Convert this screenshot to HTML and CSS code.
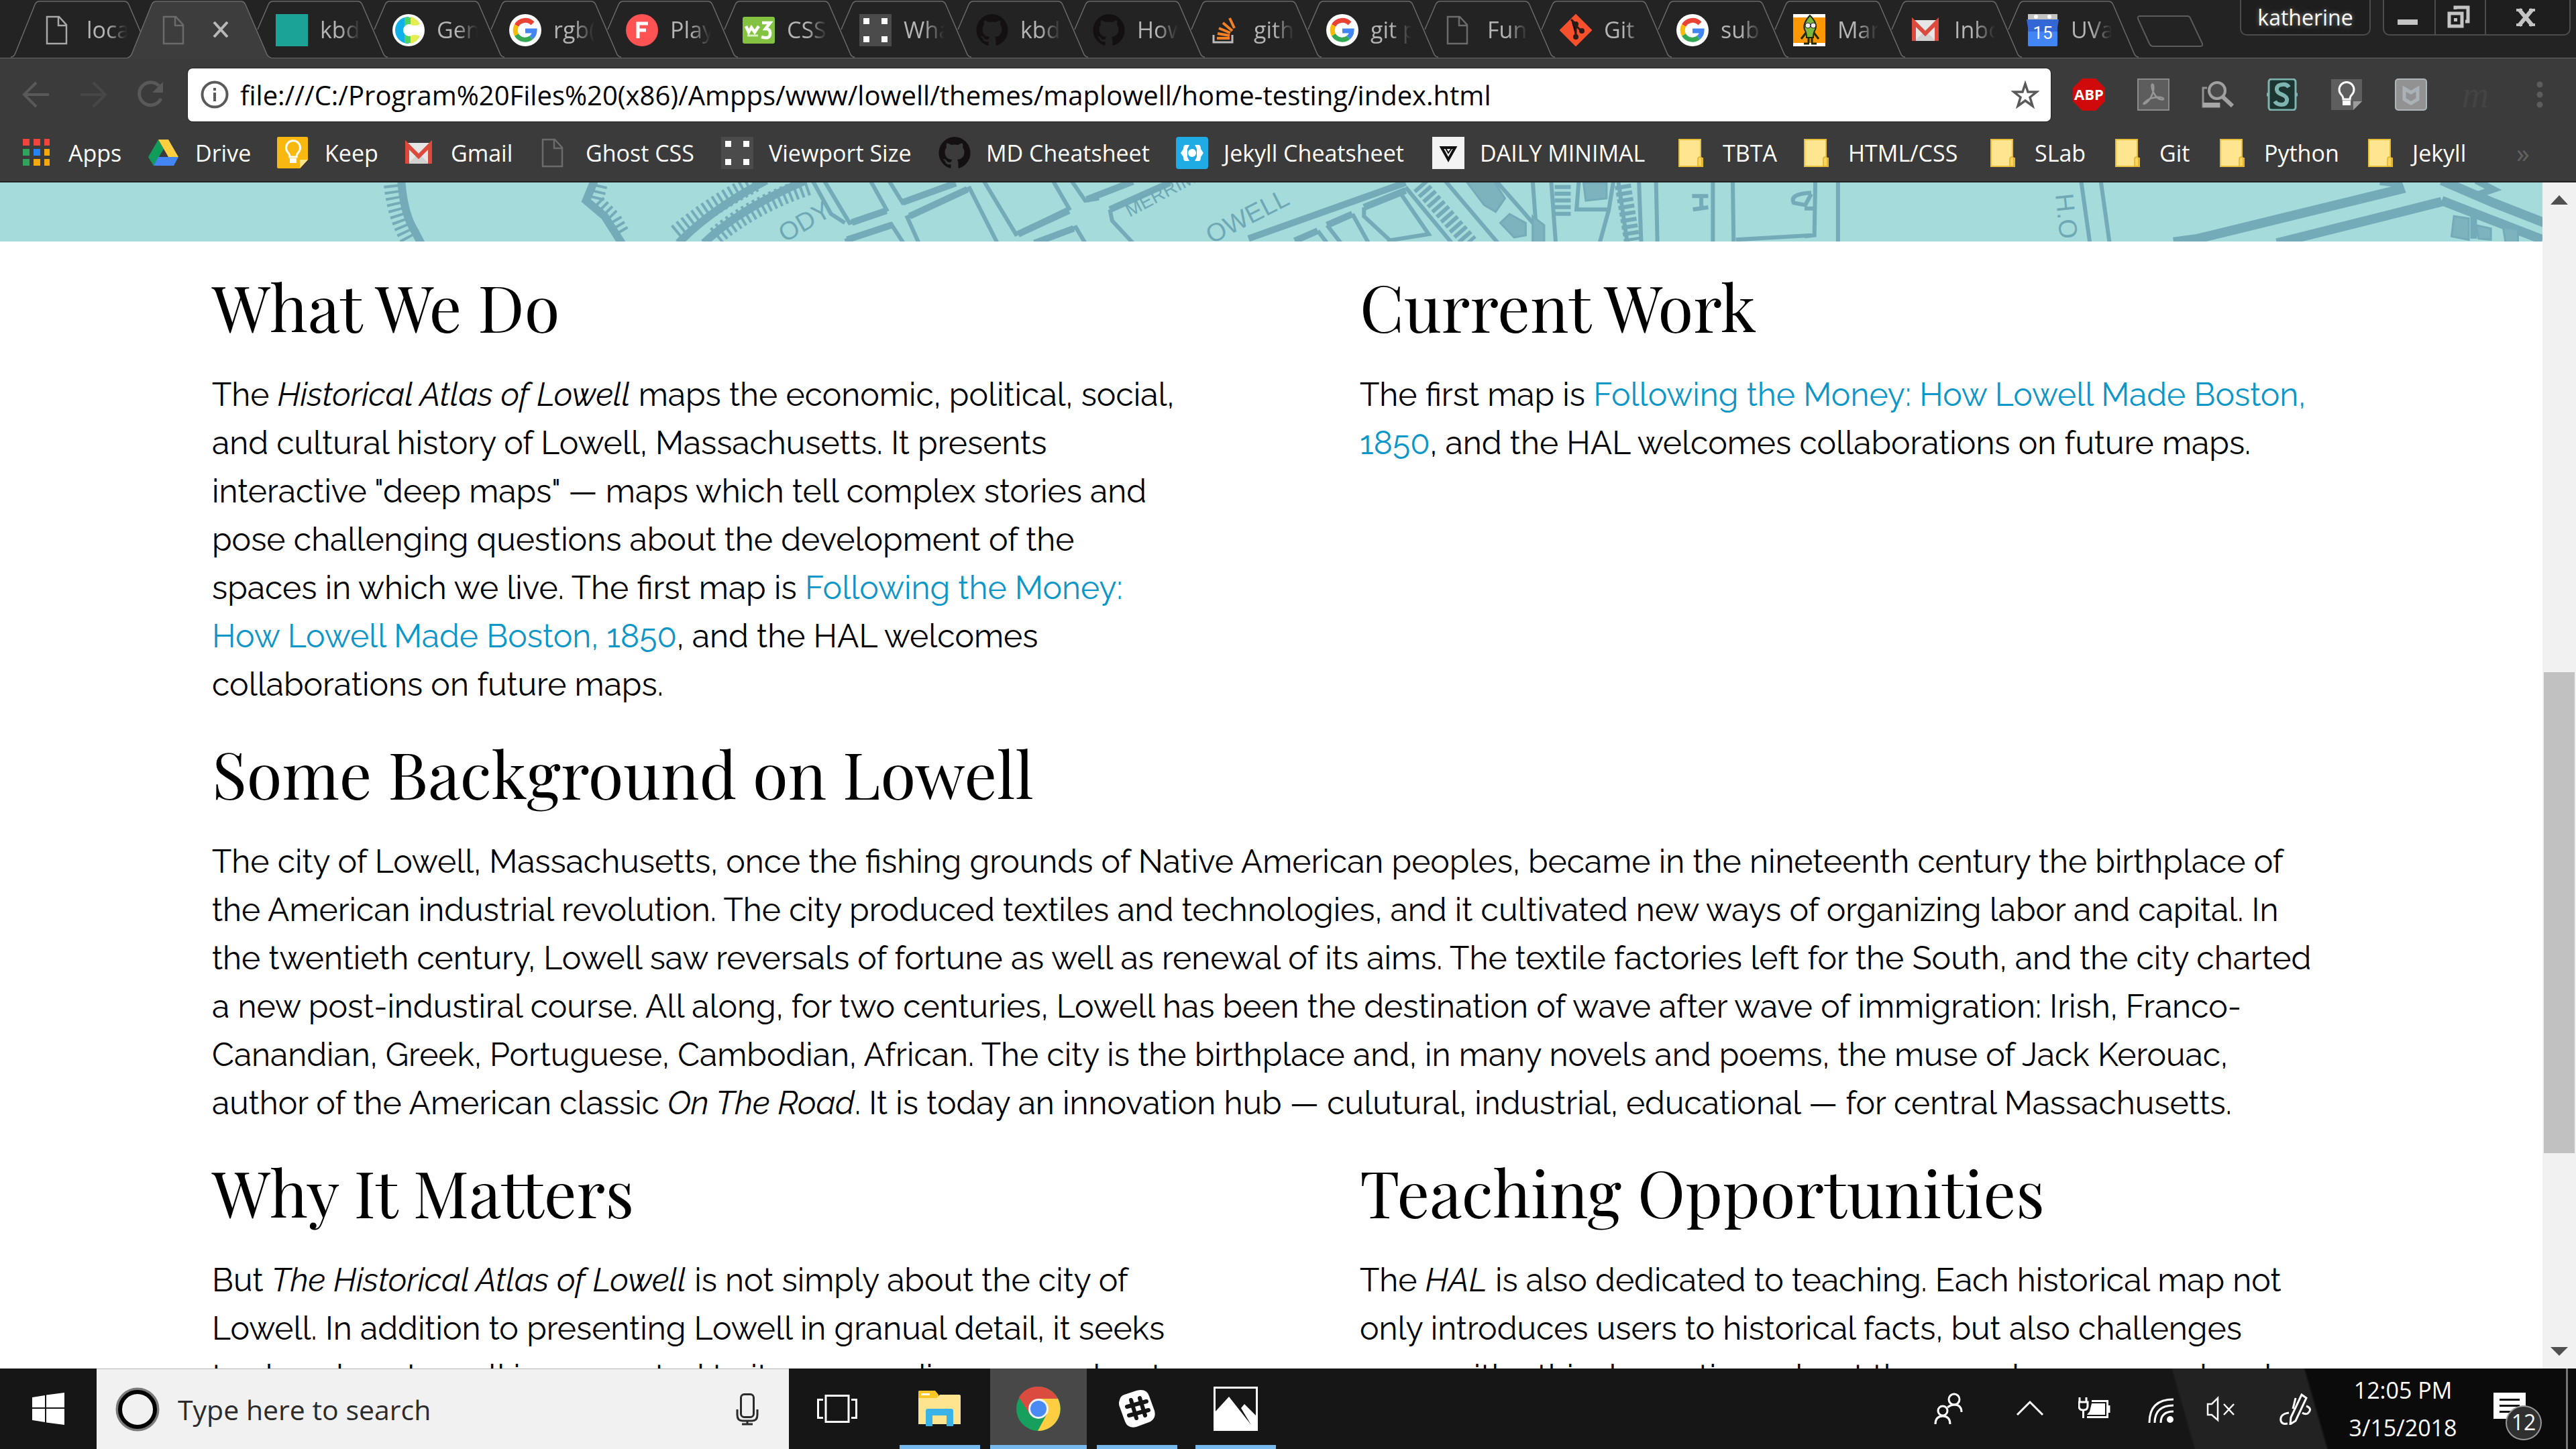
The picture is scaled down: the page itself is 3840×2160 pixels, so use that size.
FILE: index.html
```html
<!DOCTYPE html>
<html lang="en">
<head>
<meta charset="utf-8">
<title>Historical Atlas of Lowell</title>
<link rel="stylesheet" href="styles.css">
</head>
<body>
<svg class="defs" aria-hidden="true">
  <symbol id="tab-edge" viewBox="0 0 214 86"><path d="M20 44 36 7Q38 2 43 2H169Q174 2 176 7L207 79Q209 85 214 85" fill="none" stroke="#6a6a6a" stroke-width="1.5"/></symbol>
  <symbol id="tab-first" viewBox="0 0 214 86"><path d="M0 85Q5 85 7 79L36 7Q38 2 43 2H169Q174 2 176 7L207 79Q209 85 214 85" fill="none" stroke="#6a6a6a" stroke-width="1.5"/></symbol>
  <symbol id="tab-active" viewBox="0 0 214 88"><path d="M0 88V85Q5 85 7 79L36 7Q38 2 43 2H169Q174 2 176 7L207 79Q209 85 214 85V88" fill="#3c3d3c"/><path d="M0 86Q5 85 7 79L36 7Q38 2 43 2H169Q174 2 176 7L207 79Q209 85 214 86" fill="none" stroke="#6a6a6a" stroke-width="1.5"/></symbol>
  <symbol id="doc" viewBox="0 0 48 48"><path d="M7 4H25L36 16V44H7ZM24 4V17H36" fill="none" stroke="currentColor" stroke-width="2.5"/></symbol>
  <symbol id="google" viewBox="0 0 48 48"><circle cx="24" cy="24" r="24" fill="#fff"/><g fill="none" stroke-width="7"><path d="M35 14A15 15 0 0 0 11 17" stroke="#ea4335"/><path d="M11 17A15 15 0 0 0 11 31" stroke="#fbbc05"/><path d="M11 31A15 15 0 0 0 33 35" stroke="#34a853"/><path d="M33 35A14 14 0 0 0 38 25H24" stroke="#4285f4"/></g></symbol>
  <symbol id="gmail" viewBox="0 0 48 48"><rect x="3" y="9" width="40" height="31" rx="2" fill="#e6e6e6"/><path d="M7 40 23 25 39 40Z" fill="#d2d2d2"/><path d="M6 40V12L23 29 40 12V40" fill="none" stroke="#dc4a3d" stroke-width="6"/></symbol>
  <symbol id="octocat" viewBox="0 0 48 48"><path fill="#141011" d="M24 0A24 24 0 0 0 17 46.800C18 47 18.500 46.300 18.500 45.500V41C12 42.500 10.500 38 10.500 38C9.500 35 8 34.500 8 34.500C6 33 8 33 8 33C10.500 33.200 12 35.500 12 35.500C14 39 17.500 38 19 37.300C19.200 35.700 19.800 34.700 20.500 34.100C15 33.500 9.500 31.400 9.500 22.300C9.500 19.700 10.500 17.500 12 15.900C11.800 15.300 11 12.900 12.200 9.600C12.200 9.600 14.300 9 18.800 12A23 23 0 0 1 29.200 12C33.700 9 35.800 9.600 35.800 9.600C37 12.900 36.200 15.300 36 15.900C37.500 17.500 38.500 19.700 38.500 22.300C38.500 31.400 33 33.500 27.500 34.100C28.500 35 29.500 36.600 29.500 39V45.500C29.500 46.300 30 47 31 46.800A24 24 0 0 0 24 0Z"/></symbol>
  <symbol id="corners" viewBox="0 0 48 48"><rect width="48" height="48" fill="#4b4b4b"/><path d="M6 6h9v9H6zM33 6h9v9h-9zM6 33h9v9H6zM33 33h9v9h-9z" fill="#fff"/></symbol>
  <symbol id="folder" viewBox="0 0 48 48"><path d="M6 4H38V32H41V44H6Z" fill="#ffe58f" stroke="#e9bf3a" stroke-width="2"/><path d="M34 44V33Q34 30 37 30T40 33V44Z" fill="#fbd65c" stroke="#e0b02c" stroke-width="1.500"/></symbol>
</svg>

<div class="screen">
  <header class="chrome">
    <div class="strip">
      <nav class="tabs">
        <a class="tab" href="#"><svg class="edge"><use href="#tab-first"/></svg><svg class="ico lightdoc"><use href="#doc"/></svg><span>loca</span></a>
        <a class="tab active" href="#"><svg class="edge"><use href="#tab-active"/></svg><svg class="ico dimdoc"><use href="#doc"/></svg><svg class="close" viewBox="0 0 24 24"><path d="M2 1 22 23M22 1 2 23" stroke="#b8b8b8" stroke-width="4"/></svg></a>
        <a class="tab" href="#"><svg class="edge"><use href="#tab-edge"/></svg><svg class="ico" viewBox="0 0 48 48"><path d="M0 0H48V48H0Z" fill="#1aa396"/></svg><span>kbd</span></a>
        <a class="tab" href="#"><svg class="edge"><use href="#tab-edge"/></svg><svg class="ico" viewBox="0 0 48 48"><circle cx="24" cy="24" r="24" fill="#fff"/><path d="M24 4A20 20 0 0 0 24 44Z" fill="#12b0e8"/><path d="M18 5H27V43H18Z" fill="#4bd467"/><path d="M27 4Q37 6 41 15L32 19 27 16ZM27 44Q37 42 41 33L32 29 27 32Z" fill="#e2ee52"/><circle cx="25" cy="24" r="9" fill="#fff"/><path d="M27 17 46 17V31L27 31Z" fill="#fff"/></svg><span>Gen</span></a>
        <a class="tab" href="#"><svg class="edge"><use href="#tab-edge"/></svg><svg class="ico"><use href="#google"/></svg><span>rgb(</span></a>
        <a class="tab" href="#"><svg class="edge"><use href="#tab-edge"/></svg><svg class="ico" viewBox="0 0 48 48"><circle cx="24" cy="24" r="24" fill="#ff5252"/><path d="M18 36V14H33M18 24H30" fill="none" stroke="#fff" stroke-width="5"/></svg><span>Play</span></a>
        <a class="tab" href="#"><svg class="edge"><use href="#tab-edge"/></svg><svg class="ico" viewBox="0 0 48 48"><rect y="4" width="48" height="40" rx="3" fill="#83c341"/><path d="M5 18 9 27 13 20 18 27 24 18M29 13H41L34 22Q42 22 41 30T28 34" fill="none" stroke="#fff" stroke-width="4.500"/><path d="M7 32H23" stroke="#d8efc2" stroke-width="3"/></svg><span>CSS</span></a>
        <a class="tab" href="#"><svg class="edge"><use href="#tab-edge"/></svg><svg class="ico"><use href="#corners"/></svg><span>Wha</span></a>
        <a class="tab" href="#"><svg class="edge"><use href="#tab-edge"/></svg><svg class="ico"><use href="#octocat"/></svg><span>kbd</span></a>
        <a class="tab" href="#"><svg class="edge"><use href="#tab-edge"/></svg><svg class="ico"><use href="#octocat"/></svg><span>How</span></a>
        <a class="tab" href="#"><svg class="edge"><use href="#tab-edge"/></svg><svg class="ico" viewBox="0 0 48 48"><path d="M6 31V42H34V31" fill="none" stroke="#bcbcbc" stroke-width="3"/><path d="M11 36H30M12 29 30 32M14 21 31 28M20 13 34 25M30 6 37 21" stroke="#f48024" stroke-width="4"/></svg><span>gith</span></a>
        <a class="tab" href="#"><svg class="edge"><use href="#tab-edge"/></svg><svg class="ico"><use href="#google"/></svg><span>git p</span></a>
        <a class="tab" href="#"><svg class="edge"><use href="#tab-edge"/></svg><svg class="ico dimdoc"><use href="#doc"/></svg><span>Fun</span></a>
        <a class="tab" href="#"><svg class="edge"><use href="#tab-edge"/></svg><svg class="ico" viewBox="0 0 48 48"><path d="M24 1 47 24 24 47 1 24Z" fill="#f6502c" stroke="#f6502c" stroke-width="2"/><path d="M17 8 24 15V34M24 17 32 25" stroke="#2b1b17" stroke-width="3"/><g fill="#2b1b17"><circle cx="24" cy="15" r="4"/><circle cx="24" cy="34" r="4"/><circle cx="33" cy="25" r="4"/></g></svg><span>Git</span></a>
        <a class="tab" href="#"><svg class="edge"><use href="#tab-edge"/></svg><svg class="ico"><use href="#google"/></svg><span>sub</span></a>
        <a class="tab" href="#"><svg class="edge"><use href="#tab-edge"/></svg><svg class="ico" viewBox="0 0 48 48"><path d="M0 0H48V48H0Z" fill="#fff"/><path d="M0 5H48V43H0Z" fill="#ff9800"/><path d="M25 2Q37 14 33 23 30 28 30 35H20Q20 28 17 23 14 14 25 2Z" fill="#7cb83c" stroke="#1d2a0c" stroke-width="2"/><circle cx="22" cy="17" r="4" fill="#eee" stroke="#222"/><circle cx="30" cy="17" r="4" fill="#eee" stroke="#222"/><path d="M19 28 12 37M31 28 38 37M23 35V43M28 35V43M16 44H24M27 44H35" stroke="#1d2a0c" stroke-width="3"/></svg><span>Mar</span></a>
        <a class="tab" href="#"><svg class="edge"><use href="#tab-edge"/></svg><svg class="ico"><use href="#gmail"/></svg><span>Inbo</span></a>
        <a class="tab" href="#"><svg class="edge"><use href="#tab-edge"/></svg><svg class="ico" viewBox="0 0 48 48"><path d="M2 0H46V8H2Z" fill="#c3c3c3"/><circle cx="14" cy="4" r="3" fill="#fff"/><circle cx="34" cy="4" r="3" fill="#fff"/><path d="M0 8H48L46 20V46Q46 48 44 48H4Q2 48 2 46V20Z" fill="#3367d6"/><path d="M2 26H46V46Q46 48 44 48H4Q2 48 2 46Z" fill="#4285f4"/><text x="24" y="37" text-anchor="middle" class="cal">15</text></svg><span>UVa</span></a>
      </nav>
      <button class="newtab" aria-label="New tab"><svg viewBox="0 0 100 48"><path d="M5 1H76Q79 1 80 4L98 42Q99 46 95 46H25Q21 46 19 42L2 5Q1 1 5 1Z" fill="none" stroke="#5c5c5c" stroke-width="2"/></svg></button>
      <div class="window">
        <button class="user">katherine</button>
        <div class="controls">
          <button aria-label="Minimize"><svg viewBox="0 0 48 48"><path d="M9 27H39V35H9Z" fill="#c4c4c4"/></svg></button>
          <button aria-label="Restore"><svg viewBox="0 0 48 48"><path d="M19 12V9H38V30H34" fill="none" stroke="#c4c4c4" stroke-width="5"/><path d="M10 18H29V37H10Z" fill="none" stroke="#c4c4c4" stroke-width="5"/><path d="M17 25h5v5h-5z" fill="#c4c4c4"/></svg></button>
          <button class="x" aria-label="Close"><svg viewBox="0 0 48 48"><path d="M14 12 34 36M34 12 14 36" stroke="#c4c4c4" stroke-width="6"/><path d="M10 13H19M29 13H38M10 35H19M29 35H38" stroke="#c4c4c4" stroke-width="4"/></svg></button>
        </div>
      </div>
    </div>

    <div class="toolbar">
      <div class="nav">
        <button aria-label="Back"><svg class="ico" viewBox="0 0 48 48"><path d="M43 24H7M24 6 6 24 24 42" fill="none" stroke="#595959" stroke-width="4"/></svg></button>
        <button aria-label="Forward"><svg class="ico" viewBox="0 0 48 48"><path d="M5 24H41M24 6 42 24 24 42" fill="none" stroke="#474747" stroke-width="4"/></svg></button>
        <button aria-label="Reload"><svg class="ico" viewBox="0 0 48 48"><path d="M37 11A17 17 0 1 0 40 30" fill="none" stroke="#595959" stroke-width="5"/><path d="M43 5V21H27Z" fill="#595959"/></svg></button>
      </div>
      <div class="omnibox">
        <svg class="info" viewBox="0 0 42 42"><circle cx="21" cy="21" r="18.500" fill="none" stroke="#5a5a5a" stroke-width="4"/><path d="M21 18V31M21 11V15" stroke="#5a5a5a" stroke-width="4"/></svg>
        <input type="text" aria-label="Address" value="file:///C:/Program%20Files%20(x86)/Ampps/www/lowell/themes/maplowell/home-testing/index.html">
        <button aria-label="Bookmark this page"><svg class="info" viewBox="0 0 42 42"><path d="M21 5 25 17H38L28 25 32 38 21 30 10 38 14 25 4 17H17Z" fill="none" stroke="#5a5a5a" stroke-width="3.500"/></svg></button>
      </div>
      <div class="ext">
        <button aria-label="Adblock Plus"><svg class="ico" viewBox="0 0 48 48"><path d="M14 0H34L48 14V34L34 48H14L0 34V14Z" fill="#d00a0a"/><text x="24" y="32" text-anchor="middle" class="abp">ABP</text></svg></button>
        <button aria-label="PDF"><svg class="ico" viewBox="0 0 48 48"><rect x="1" y="1" width="46" height="46" fill="#5d5d5d" stroke="#8b8b8b" stroke-width="2"/><path d="M10 38C18 36 26 20 24 10 22 6 20 10 23 18 27 28 33 33 39 31 40 26 20 27 13 34Q8 38 10 38Z" fill="none" stroke="#969696" stroke-width="2.500"/></svg></button>
        <button aria-label="Page search"><svg class="ico" viewBox="0 0 48 48"><path d="M8 14H2V42H26V36" fill="none" stroke="#929292" stroke-width="3"/><path d="M2 36H27V43H2Z" fill="#a7a7a7"/><circle cx="23" cy="18" r="12" fill="#4a4a4a" stroke="#a0a0a0" stroke-width="4"/><path d="M31 27 46 41" stroke="#a0a0a0" stroke-width="6"/></svg></button>
        <button aria-label="Stylish"><svg class="ico" viewBox="0 0 48 48"><rect x="4" y="1" width="40" height="46" rx="4" fill="#1c3531" stroke="#7fb5b0" stroke-width="3"/><path d="M1 24H5M43 24H47" stroke="#7fb5b0" stroke-width="5"/><path d="M34 13Q31 8 24 9 15 10 16 17 17 22 24 24 32 27 31 33 30 39 23 39 16 39 13 34" fill="none" stroke="#7fb5b0" stroke-width="6"/></svg></button>
        <button aria-label="Keep"><svg class="ico" viewBox="0 0 48 48"><path d="M1 1H47V34L34 47H1Z" fill="#5e5e5e"/><path d="M34 47V34H47Z" fill="#9d9d9d"/><path d="M19 31Q19 27 16 24A11 11 0 1 1 32 24Q29 27 29 31Z" fill="none" stroke="#fff" stroke-width="3"/><path d="M18 33H30V40H18Z" fill="#fff"/></svg></button>
        <button aria-label="WebAdvisor"><svg class="ico" viewBox="0 0 48 48"><rect x="1" y="1" width="46" height="46" rx="4" fill="#929292" stroke="#adb8bc" stroke-width="2"/><path d="M14 15 24 21 34 15V31L24 37 14 31Z" fill="none" stroke="#a9b2b7" stroke-width="5"/></svg></button>
        <button aria-label="Mendeley" class="mend">m</button>
        <button aria-label="Menu"><svg class="ico" viewBox="0 0 48 48"><g fill="#5c5c5c"><circle cx="24" cy="9" r="4.500"/><circle cx="24" cy="24" r="4.500"/><circle cx="24" cy="39" r="4.500"/></g></svg></button>
      </div>
    </div>

    <nav class="bookmarks">
      <a href="#"><svg class="ico" viewBox="0 0 48 48"><path d="M3 3h10v10H3zM19 3h10v10H19zM35 3h8v10H35z" fill="#f4433a"/><path d="M3 18h10v10H3zM3 33h10v10H3z" fill="#2fa45a"/><path d="M19 18h10v10H19z" fill="#2483f5"/><path d="M35 18h8v10h-8zM19 33h10v10H19zM35 33h8v10h-8z" fill="#f6a80c"/></svg>Apps</a>
      <a href="#"><svg class="ico" viewBox="0 0 48 48"><path d="M16 4 1 30 9 43 24 18Z" fill="#119c5b"/><path d="M16 4H31L46 30H31Z" fill="#ffcf40"/><path d="M16 30H46L39 43H9Z" fill="#4385f5"/></svg>Drive</a>
      <a href="#"><svg class="ico" viewBox="0 0 48 48"><path d="M2 0H44Q46 0 46 2V34L34 47H2Q0 47 0 45V2Q0 0 2 0Z" fill="#f9b80f"/><path d="M34 47V34H46Z" fill="#ffe48a"/><path d="M19 30Q19 26 16 23A10.500 10.500 0 1 1 32 23Q29 26 29 30Z" fill="none" stroke="#fff" stroke-width="3"/><path d="M19 32H29V39H19Z" fill="#fff"/></svg>Keep</a>
      <a href="#"><svg class="ico"><use href="#gmail"/></svg>Gmail</a>
      <a href="#"><svg class="ico dimdoc"><use href="#doc"/></svg>Ghost CSS</a>
      <a href="#"><svg class="ico"><use href="#corners"/></svg>Viewport Size</a>
      <a href="#"><svg class="ico"><use href="#octocat"/></svg>MD Cheatsheet</a>
      <a href="#"><svg class="ico" viewBox="0 0 48 48"><rect width="48" height="48" rx="4" fill="#1fabe3"/><path d="M20 12H14Q11 12 11 18L7 24 11 30Q11 36 14 36H20L17 30V18ZM28 12H34Q37 12 37 18L41 24 37 30Q37 36 34 36H28L31 30V18Z" fill="#fff"/><circle cx="24" cy="24" r="6" fill="#fff"/></svg>Jekyll Cheatsheet</a>
      <a href="#"><svg class="ico" viewBox="0 0 48 48"><path d="M0 0H48V48H0Z" fill="#f3f3f3"/><path d="M14 16H34L24 34Z" fill="none" stroke="#111" stroke-width="4"/><path d="M20 17 24 24 29 17" fill="none" stroke="#111" stroke-width="2"/></svg>DAILY MINIMAL</a>
      <a href="#"><svg class="ico"><use href="#folder"/></svg>TBTA</a>
      <a href="#"><svg class="ico"><use href="#folder"/></svg>HTML/CSS</a>
      <a href="#"><svg class="ico"><use href="#folder"/></svg>SLab</a>
      <a href="#"><svg class="ico"><use href="#folder"/></svg>Git</a>
      <a href="#"><svg class="ico"><use href="#folder"/></svg>Python</a>
      <a href="#"><svg class="ico"><use href="#folder"/></svg>Jekyll</a>
      <button class="more" aria-label="More bookmarks">»</button>
    </nav>
  </header>

  <div class="view">
    <main class="page">
      <svg class="map" viewBox="0 0 3790 88" preserveAspectRatio="xMidYMid slice" aria-hidden="true">
        <g class="ink" transform="translate(550 -3) scale(.6888 .3333)">
          <path class="w12" d="M70 0Q75 150 100 230L115 290M488 0 470 90 510 160 550 290"/>
          <path class="hatch" d="M48 20Q55 160 85 270M500 20 492 90 530 170 550 240"/>
          <path class="w12" d="M860 0Q740 130 670 280M945 0Q800 130 725 280"/>
          <path class="hatch wide" d="M835 10Q740 110 665 240M950 25Q830 110 750 250"/>
          <path class="w6" d="M960 0 1000 150 1030 190M985 0 1040 190 1120 130 1085 0M1125 0 1155 100 1265 15M1330 0 1400 240 1515 125 1480 0M1520 0 1550 90 1580 80M1190 280 1165 165 1300 35 1360 280M1030 270 1130 195 1160 290M1430 290 1530 210 1550 280"/>
          <path class="w9" d="M1045 188 1120 135M1155 98 1270 12M1170 160 1295 40M1405 240 1515 135M1035 265 1130 200M1440 280 1525 215"/>
        </g>
        <g class="ink" transform="translate(1620 -3) scale(.6888 .3333)">
          <path class="w9" d="M0 85 100 5M50 130 180 10M350 260 690 10M600 120 690 45M520 200 575 150M450 270 500 225"/>
          <path class="w6" d="M50 130 55 180 100 280M600 120 600 160 660 275M690 30 790 280M520 200 550 280M575 150 610 280M500 225 520 280M650 270 740 240 680 60M775 0 890 280M885 0 970 200M965 0 975 280M1005 0 1015 280M1195 0 1200 280M1232 0 1235 280M1355 0 1355 280M1398 0 1400 280M1065 0 1060 130 1130 130 1140 0M1130 130 1110 280M1150 0 1170 280M1405 265 1568 245"/>
          <path class="hatch dark" d="M720 20 830 280M1030 20 1030 170M1160 20 1180 270"/>
          <path class="blot" d="M820 0H880L905 80 885 140 860 110ZM915 150 950 190V245L925 255 895 190ZM1075 10H1125V80L1080 90ZM965 160 990 200V290H965Z"/>
          <path class="w6" d="M1310 70H1345M1330 75V130M1312 130 1345 120M1568 55Q1520 60 1530 100L1555 110 1568 60"/>
        </g>
        <g class="ink" transform="translate(2690 -3) scale(.7334 .3333)">
          <path class="w6" d="M22 0 20 245 0 250M68 0V280M562 0 580 280M602 0 620 280M0 125H20"/>
          <path class="w14" d="M750 275 800 260 1210 40 1205 10 1170 0M960 280 1295 95M1295 0 1400 100 1510 195M1295 90 1500 265"/>
          <path class="blot" d="M1320 160 1350 170V265L1315 250ZM1365 200 1395 215V265L1370 260ZM1420 210 1450 220V280H1425Z"/>
          <path class="w9" d="M1365 0 1400 40 1360 70M1360 130V260"/>
        </g>
        <g class="lettering">
          <text transform="translate(1684 52) rotate(-28)">MERRIM</text>
          <text class="big" transform="translate(1806 92) rotate(-27)">OWELL</text>
          <text class="big" transform="translate(1170 90) rotate(-30)">ODY</text>
          <text class="big" transform="translate(3064 18) rotate(84)">H.O</text>
        </g>
      </svg>
      <div class="content">
        <section>
          <h1>What We Do</h1>
          <p>The <em>Historical Atlas of Lowell</em> maps the economic, political, social,<br>and cultural history of Lowell, Massachusetts. It presents<br>interactive "deep maps" — maps which tell complex stories and<br>pose challenging questions about the development of the<br>spaces in which we live. The first map is <a href="#">Following the Money:<br>How Lowell Made Boston, 1850</a>, and the HAL welcomes<br>collaborations on future maps.</p>
        </section>
        <section>
          <h1>Current Work</h1>
          <p>The first map is <a href="#">Following the Money: How Lowell Made Boston,<br>1850</a>, and the HAL welcomes collaborations on future maps.</p>
        </section>
        <section class="full">
          <h1>Some Background on Lowell</h1>
          <p>The city of Lowell, Massachusetts, once the fishing grounds of Native American peoples, became in the nineteenth century the birthplace of<br>the American industrial revolution. The city produced textiles and technologies, and it cultivated new ways of organizing labor and capital. In<br>the twentieth century, Lowell saw reversals of fortune as well as renewal of its aims. The textile factories left for the South, and the city charted<br>a new post-industiral course. All along, for two centuries, Lowell has been the destination of wave after wave of immigration: Irish, Franco-<br>Canandian, Greek, Portuguese, Cambodian, African. The city is the birthplace and, in many novels and poems, the muse of Jack Kerouac,<br>author of the American classic <em>On The Road</em>. It is today an innovation hub — culutural, industrial, educational — for central Massachusetts.</p>
        </section>
        <section>
          <h1>Why It Matters</h1>
          <p>But <em>The Historical Atlas of Lowell</em> is not simply about the city of<br>Lowell. In addition to presenting Lowell in granual detail, it seeks<br>to show how Lowell is connected to its surrounding areas, about</p>
        </section>
        <section>
          <h1>Teaching Opportunities</h1>
          <p>The <em>HAL</em> is also dedicated to teaching. Each historical map not<br>only introduces users to historical facts, but also challenges<br>users with ethical questions about the ways humans read and</p>
        </section>
      </div>
    </main>
    <div class="scroll" aria-hidden="true">
      <svg viewBox="0 0 50 50"><path d="M12 33 25 19 38 33Z" fill="#505050"/></svg>
      <div class="track"><div class="thumb"></div></div>
      <svg viewBox="0 0 50 50"><path d="M12 18 25 31 38 18Z" fill="#505050"/></svg>
    </div>
  </div>

  <footer class="taskbar">
    <button class="start" aria-label="Start"><svg class="ico" viewBox="0 0 48 48"><path d="M0 7 19 4V22H0ZM21 3.500 48 0V22H21ZM0 24H19V44L0 41ZM21 24H48V48L21 44.500Z" fill="#fff"/></svg></button>
    <div class="search">
      <svg class="ring" viewBox="0 0 66 66"><circle cx="33" cy="33" r="29" fill="none" stroke="#7b7b7b" stroke-width="7"/><circle cx="33" cy="33" r="26" fill="none" stroke="#000" stroke-width="6"/></svg>
      <input type="text" aria-label="Search" placeholder="Type here to search">
      <button aria-label="Speak"><svg class="ico" viewBox="0 0 48 48"><g fill="none" stroke="#2b2b2b" stroke-width="3"><rect x="14.500" y="1.500" width="19" height="34" rx="5"/><path d="M9 24V32Q9 41 17 41H31Q39 41 39 32V24M24 41V47M16 46H32"/></g></svg></button>
    </div>
    <div class="apps">
      <button class="view-btn" aria-label="Task View"><svg viewBox="0 0 66 66"><g fill="none" stroke="#fff" stroke-width="3"><path d="M16 13.500H50V52.500H16ZM12 19.500H4.500V46.500H12M54 19.500H61.500V46.500H54"/></g></svg></button>
      <button class="run" aria-label="File Explorer"><svg viewBox="0 0 66 66"><path d="M1 7Q1 6 3 6H26L31 12V17H1Z" fill="#f9c626"/><path d="M5 10H18V13H5Z" fill="#fff"/><path d="M1 17H28L33 12H62Q64 12 64 14V56H1Z" fill="#ffe48f"/><path d="M12 59V36Q12 33 15 33H50Q53 33 53 36V59H43V43H22V59Z" fill="#39b3e8"/></svg></button>
      <button class="run current" aria-label="Chrome"><svg viewBox="0 0 66 66"><circle cx="33" cy="33" r="33" fill="#17a05d"/><path d="M33 0A33 33 0 0 1 62 18H33L20 41 4 16A33 33 0 0 1 33 0Z" fill="#db4b40"/><path d="M62 18A33 33 0 0 1 32 66L46 40 46 25 33 18Z" fill="#ffcd42"/><circle cx="33" cy="33" r="15" fill="#f3f3f3"/><circle cx="33" cy="33" r="12" fill="#4a8af4"/></svg></button>
      <button class="run" aria-label="Slack"><svg viewBox="0 0 66 66"><path d="M7 20Q8 14 14 12L32 6Q47 2 51 14L59 36Q62 48 51 53L32 60Q19 63 15 52L7 30Q5 25 7 20Z" fill="#fff"/><path d="M24 20 32 47M37 17 45 43M18 30 47 22M21 43 50 35" stroke="#161616" stroke-width="6" stroke-linecap="round"/></svg></button>
      <button class="run" aria-label="Photos"><svg viewBox="0 0 66 66"><path d="M1.500 1.500H64.500V64.500H1.500Z" fill="none" stroke="#fff" stroke-width="3"/><path d="M2 38 23 15 56 57 41 32 46 26 64 44V65H2Z" fill="#fff"/></svg></button>
    </div>
    <div class="tray">
      <button class="people" aria-label="People"><svg class="ico" viewBox="0 0 48 48"><g fill="none" stroke="#fff" stroke-width="3"><circle cx="31" cy="10" r="8"/><circle cx="14" cy="27" r="7"/><path d="M3 47Q3 35 14 35T25 47M21 22Q26 18 31 18 42 18 42 29"/></g></svg></button>
      <button aria-label="Show hidden icons"><svg class="ico" viewBox="0 0 48 48"><path d="M5 33 24 14 43 33" fill="none" stroke="#fff" stroke-width="3"/></svg></button>
      <button aria-label="Battery"><svg class="ico" viewBox="0 0 48 48"><path d="M20 12.500H43.500V36.500H13M46 19V30" fill="none" stroke="#fff" stroke-width="3"/><path d="M20 16H40V33H13L17 28Z" fill="#fff"/><path d="M2 7V13M12 7V13M1 14H14V20Q14 26 7.500 26T1 20ZM7.500 26V38" fill="none" stroke="#fff" stroke-width="3"/></svg></button>
      <button class="wifi" aria-label="Network"><svg class="ico" viewBox="0 0 48 48"><g fill="none" stroke="#fff" stroke-width="3"><path d="M7 45Q7 10 43 10M15 45Q15 19 43 19M24 45Q24 28 43 28"/></g><circle cx="38" cy="40" r="5" fill="#fff"/></svg></button>
      <button class="vol" aria-label="Volume"><svg class="ico" viewBox="0 0 48 48"><path d="M4 17H10L19 8V41L10 33H4ZM28 17 43 33M43 17 28 33" fill="none" stroke="#fff" stroke-width="2.500"/></svg></button>
      <button class="pen" aria-label="Ink"><svg class="ico" viewBox="0 0 48 48"><g fill="none" stroke="#fff" stroke-width="3"><path d="M33 3 40 8 24 42 16 47 17 37ZM24 8 20 24M40 20Q50 24 42 31 38 33 34 30M14 30Q0 32 2 42 4 48 12 46"/></g></svg></button>
      <button class="clock"><span>12:05 PM</span><span>3/15/2018</span></button>
      <button class="notes" aria-label="Notifications"><svg class="ico" viewBox="0 0 48 48"><path d="M0 0H48V39H30L24 48V39H0Z" fill="#fff"/><path d="M9 10.500H39M9 19.500H39M9 28.500H30" stroke="#111" stroke-width="3"/></svg><span class="badge">12</span></button>
      <button class="peek" aria-label="Show desktop"></button>
    </div>
  </footer>
</div>
</body>
</html>
```
FILE: styles.css
```css
* { box-sizing: border-box; }
html, body { height: 100%; }
body { margin: 0; font-family: "Segoe UI", "Open Sans", sans-serif; font-size: 34px; }
button { margin: 0; padding: 0; border: 0; background: none; font: inherit; color: inherit; display: flex; align-items: center; justify-content: center; }
input { border: 0; padding: 0; background: none; outline: 0; min-width: 0; font: inherit; }
a { text-decoration: none; }
svg { display: block; flex: none; }
.defs { position: absolute; width: 0; height: 0; }
.ico { width: 48px; height: 48px; }
.screen { display: flex; flex-direction: column; height: 100vh; overflow: hidden; }

/* browser frame */
.chrome { background: #3b3b3b; color: #fff; border-bottom: 2px solid #222; }
.strip { display: flex; height: 87px; background: #232323; border-bottom: 1px solid #6a6a6a; padding-left: 16px; }
.tabs { display: flex; }
.tab { position: relative; display: flex; align-items: center; gap: 18px; width: 174px; height: 86px; padding: 2px 0 0 47px; color: #b4b4b4; }
.tab .ico { margin-top: 2px; }
.tab.active { z-index: 1; }
.edge { position: absolute; left: 0; top: 0; width: 214px; height: 86px; }
.active .edge { height: 88px; z-index: -1; }
.tab span { width: 61px; overflow: hidden; white-space: nowrap; line-height: 48px; mask-image: linear-gradient(90deg, #000 50%, transparent); }
.close { width: 24px; height: 24px; margin-left: 14px; }
.lightdoc { color: #a8a8a8; }
.dimdoc { color: #6b6b6b; }
.cal { font: 26px Roboto, sans-serif; fill: #fff; }
.newtab { width: 100px; height: 48px; margin: 23px 0 0 37px; }
.newtab svg { width: 100px; height: 48px; }
.window { display: flex; gap: 18px; margin-left: auto; padding-right: 8px; height: 53px; }
.user, .controls { border: 2px solid #4c4c4c; border-top: 0; border-radius: 0 0 10px 10px; background: #1e1e1e; height: 53px; }
.user { width: 195px; text-shadow: 0 0 6px #888; font-size: 32px; }
.controls { display: flex; }
.controls button { width: 75px; padding-right: 6px; }
.controls button + button { border-left: 2px solid #4c4c4c; }
.controls .x { width: 126px; }
.controls svg { width: 48px; height: 48px; }

.toolbar { display: flex; align-items: center; height: 108px; padding: 0 30px; }
.nav { display: flex; gap: 37px; margin-right: 32px; }
.omnibox { flex: 1; display: flex; align-items: center; height: 79px; padding: 0 17px 0 19px; background: #fff; border-radius: 7px; box-shadow: 0 0 0 1px #252525; }
.info { width: 42px; height: 42px; }
.omnibox input { flex: 1; margin-left: 17px; font-size: 40px; color: #000; }
.ext { display: flex; gap: 48px; margin-left: 33px; }
.ext button { width: 48px; height: 48px; }
.abp { font: bold 22px "Open Sans", sans-serif; fill: #fff; }
.mend { font: italic 56px "Liberation Serif", serif; color: #444; }
.bookmarks { display: grid; height: 75px; padding: 0 0 9px 31px; align-items: center; grid-template-columns: minmax(0, 189fr) minmax(0, 193fr) minmax(0, 188fr) minmax(0, 201fr) minmax(0, 273fr) minmax(0, 324fr) minmax(0, 354fr) minmax(0, 382fr) minmax(0, 362fr) minmax(0, 187fr) minmax(0, 278fr) minmax(0, 186fr) minmax(0, 156fr) minmax(0, 221fr) minmax(0, 226fr) minmax(0, 89fr); }
.bookmarks a { display: flex; align-items: center; gap: 23px; color: #fff; white-space: nowrap; line-height: 48px; }
.more { justify-content: flex-start; color: #626262; font-size: 40px; line-height: 48px; }

/* web page */
.view { flex: 1; min-height: 0; display: flex; background: #fff; }
.page { flex: 1; min-width: 0; overflow: hidden; }
.map { width: 100%; height: 88px; background: #a5dbdb; }
.ink path { fill: none; stroke: #74abb8; vector-effect: non-scaling-stroke; }
.ink .w6 { stroke-width: 6px; }
.ink .w9 { stroke-width: 10px; }
.ink .w12 { stroke-width: 12px; }
.ink .w14 { stroke-width: 14px; }
.ink .hatch { stroke-width: 22px; stroke-dasharray: 4 5; }
.ink .wide { stroke-width: 28px; }
.ink .dark { stroke-width: 24px; stroke-dasharray: 6 4; }
.ink .blot { fill: #7db3bd; stroke-width: 3px; }
.lettering { font: 28px "Liberation Sans", sans-serif; fill: #6fa8b5; }
.lettering .big { font-size: 38px; }
.content { display: grid; grid-template-columns: repeat(2, minmax(0, 1fr)); column-gap: 264px; padding: 0 316px; }
.full { grid-column: 1 / -1; }
h1 { margin: 0; padding: 24px 0; font: 96px/144px "Playfair Display", "Liberation Serif", serif; color: #000; white-space: nowrap; }
.content p { margin: 0; font: 400 48px/72px Raleway, "Open Sans", sans-serif; color: #000; white-space: nowrap; }
.content a { color: #0d96c8; }
.scroll { display: flex; flex-direction: column; width: 50px; background: #f1f1f1; }
.scroll svg { width: 50px; height: 50px; }
.track { flex: 1; padding: 0 2px; display: flow-root; }
.thumb { height: 43%; margin-top: 680px; background: #c1c1c1; }

/* taskbar */
.taskbar { display: flex; height: 120px; flex: none; color: #fff; background: #161616 linear-gradient(74deg, transparent 84.400%, #222 84.500%, #222 89.500%, #0b0b0b 89.600%); }
.start { width: 144px; }
.search { display: flex; align-items: center; width: 1032px; padding: 0 38px 0 28px; background: #f1f1f1; border-top: 1px solid #b5b5b5; }
.ring { width: 66px; height: 66px; }
.search input { flex: 1; margin-left: 27px; font-size: 41px; }
.search input::placeholder { color: #2b2b2b; opacity: 1; }
.apps { display: flex; gap: 3px; }
.apps button { width: 144px; border-bottom: 6px solid transparent; padding-top: 6px; position: relative; }
.apps svg { width: 66px; height: 66px; }
.apps .view-btn { margin-right: 6px; }
.run::after { content: ""; position: absolute; left: 12px; right: 12px; bottom: -6px; height: 6px; background: #76b9ed; }
.apps .current { background: #484848; }
.current::after { left: 0; right: 0; }
.tray { display: flex; margin-left: auto; }
.tray button { width: 96px; }
.tray .people { margin-right: 24px; }
.tray .wifi { width: 102px; }
.tray .vol { width: 78px; }
.tray .pen { width: 144px; }
.tray .clock { width: 176px; flex-direction: column; line-height: 56px; }
.tray .notes { width: 142px; position: relative; }
.badge { position: absolute; left: 65px; top: 55px; width: 54px; height: 52px; border: 2px solid #999; border-radius: 50%; background: #303030; font-size: 32px; line-height: 46px; text-align: center; }
.tray .peek { width: 15px; margin-left: 13px; border-left: 3px solid #777; }
```
